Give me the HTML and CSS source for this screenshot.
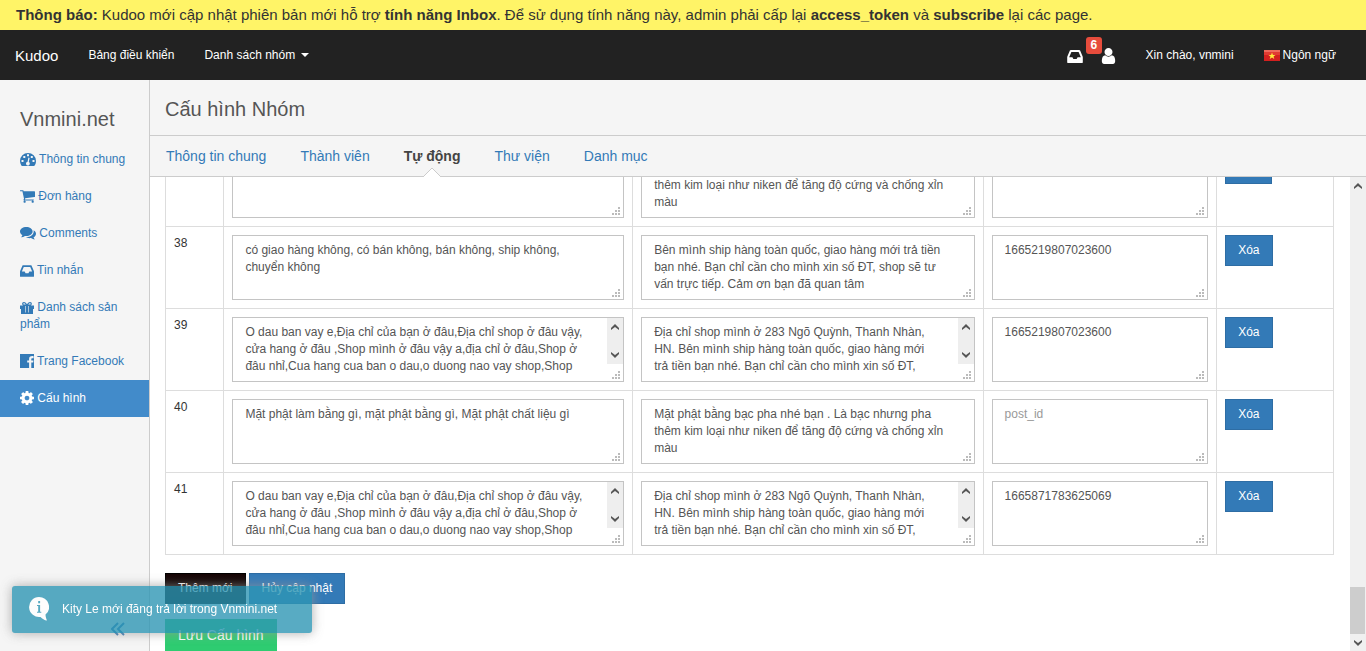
FILE: index.html
```html
<!DOCTYPE html>
<html lang="vi">
<head>
<meta charset="utf-8">
<title>Kudoo - Cấu hình Nhóm</title>
<link rel="stylesheet" href="styles.css">
</head>
<body>
<svg class="defs" aria-hidden="true">
  <symbol id="inbox" viewBox="128 256 1536 1280"><path d="M1151 960h316q-1-3-2.5-8t-2.5-8l-212-496h-708l-212 496q-1 2-2.5 8t-2.5 8h316l95 192h320zm513 30v482q0 26-19 45t-45 19h-1408q-26 0-45-19t-19-45v-482q0-62 25-123l238-552q10-25 36.5-42t52.5-17h832q26 0 52.5 17t36.5 42l238 552q25 61 25 123z"/></symbol>
  <symbol id="grip" viewBox="0 0 8 8"><path d="M0 6h2v2H0zM3 6h2v2H3zM6 6h2v2H6zM3 3h2v2H3zM6 3h2v2H6zM6 0h2v2H6z"/></symbol>
  <symbol id="up" viewBox="0 0 8 6"><path d="M0 4 4 0l4 4v2L4 3 0 6z"/></symbol>
  <symbol id="down" viewBox="0 0 8 6"><path d="M0 2l4 4 4-4V0L4 3 0 0z"/></symbol>
</svg>

<div class="notice"><b>Thông báo:</b> Kudoo mới cập nhật phiên bản mới hỗ trợ <b>tính năng Inbox</b>. Để sử dụng tính năng này, admin phải cấp lại <b>access_token</b> và <b>subscribe</b> lại các page.</div>

<nav class="topbar">
  <a class="brand" href="#">Kudoo</a>
  <a href="#">Bảng điều khiển</a>
  <a href="#">Danh sách nhóm <span class="caret"></span></a>
  <div class="alerts">
    <a class="alert-link" href="#" aria-label="Hộp thư"><svg class="inbox-icon"><use href="#inbox"/></svg><span class="badge">6</span></a>
    <a class="alert-link" href="#" aria-label="Tài khoản"><svg class="user-icon" viewBox="256 128 1280 1536"><path d="M1536 1399q0 109-62.5 187t-150.5 78h-854q-88 0-150.5-78t-62.5-187q0-85 8.5-160.5t31.5-152 58.5-131 94-89 134.5-34.5q131 128 313 128t313-128q76 0 134.5 34.5t94 89 58.5 131 31.5 152 8.5 160.5zm-256-887q0 159-112.5 271.5t-271.5 112.5-271.5-112.5-112.5-271.5 112.5-271.5 271.5-112.5 271.5 112.5 112.5 271.5z"/></svg></a>
  </div>
  <a href="#">Xin chào, vnmini</a>
  <a class="language" href="#"><svg class="flag" viewBox="0 0 16 11"><path fill="#d3201f" d="M0 0h16v11H0z"/><path fill="#ee6a5c" d="M0 0h16v2H0z"/><path fill="#e23b32" d="M0 2h16v3H0z"/><path fill="#ffec3d" d="M8 2.500l.9 2.400h2.600L9.500 6.500l.8 2.500L8 7.500 5.700 9l.8-2.500-2-1.600h2.600z"/></svg>Ngôn ngữ</a>
</nav>

<div class="shell">
  <aside class="sidebar">
    <h2>Vnmini.net</h2>
    <ul>
      <li><a href="#"><svg class="wide" viewBox="0 0 16 13"><path fill-rule="evenodd" d="M8 0a8 8 0 0 1 8 8c0 1.700-.5 3.200-1.300 4.500-.2.300-.4.500-.8.500H2.100c-.4 0-.6-.2-.8-.5A8.300 8.300 0 0 1 0 8a8 8 0 0 1 8-8zM7 1.300v2h2v-2zM3.300 3v2h2V3zM10.800 3v2h2V3zM1.500 7v2h2V7zM12.500 7v2h2V7zM8.400 4.600 7.600 8.700a1.900 1.900 0 1 0 1.200.2l.8-4z"/></svg> Thông tin chung</a></li>
      <li><a href="#"><svg class="cart" viewBox="64 256 1664 1408"><path d="M704 1536q0 52-38 90t-90 38-90-38-38-90 38-90 90-38 90 38 38 90zm896 0q0 52-38 90t-90 38-90-38-38-90 38-90 90-38 90 38 38 90zm128-1088v512q0 24-16.500 42.500t-40.500 21.500l-1044 122q13 60 13 70 0 16-24 64h920q26 0 45 19t19 45-19 45-45 19h-1024q-26 0-45-19t-19-45q0-11 8-31.500t16-36 21.500-40 15.500-29.500l-177-823h-204q-26 0-45-19t-19-45 19-45 45-19h256q16 0 28.500 6.500t19.500 15.500 13 24.500 8 26 5.500 29.500 4.500 26h1201q26 0 45 19t19 45z"/></svg> Đơn hàng</a></li>
      <li><a href="#"><svg class="wide" viewBox="0 0 16 13"><path d="M6.300 0c3.500 0 6.300 2 6.300 4.500S9.800 9 6.300 9L5 8.900C3.800 9.700 2.500 10.200 1 10.300c.7-.7 1.200-1.300 1.400-2.200C.9 7.300 0 6 0 4.500 0 2 2.800 0 6.300 0z"/><path d="M13.600 3.300c1.500.8 2.400 2 2.400 3.400 0 1.500-.9 2.800-2.400 3.600.2.900.7 1.500 1.400 2.200-1.500-.1-2.800-.6-4-1.400-1.900.3-3.800 0-5.200-1 4.300.2 7.800-2 7.900-5.600 0-.4 0-.8-.1-1.200z"/></svg> Comments</a></li>
      <li><a href="#"><svg><use href="#inbox"/></svg> Tin nhắn</a></li>
      <li><a href="#"><svg viewBox="0 0 14 12"><path fill-rule="evenodd" d="M0 3.500h3.300C1.800 3.200 1.500.1 3.900 0 5.500 0 6.200 1.200 7 2.300 7.800 1.200 8.500 0 10.100 0c2.400.1 2.100 3.200.6 3.500H14V7h-1v5H1V7H0zM3.900 1.200c-1 .1-.9 1.300 0 1.300h1.900c-.6-.8-1.100-1.300-1.900-1.300zM10.100 1.200c-.8 0-1.300.5-1.900 1.300h1.900c.9 0 1-1.200 0-1.300zM5.300 4v6.500h.6V4zM8.100 4v6.500h.6V4z"/></svg> Danh sách sản phẩm</a></li>
      <li><a href="#"><svg class="square" viewBox="0 0 14 14"><path d="M0 0h14v14h-2.700V8.600h1.900l.3-2.100h-2.200V5.200c0-.6.200-1 1.100-1h1.200V2.200c-3-.4-4.500.5-4.500 2.800v1.500H7.200v2.100h1.900V14H0z"/></svg> Trang Facebook</a></li>
      <li class="active"><a href="#"><svg class="square" viewBox="128 128 1536 1536"><path d="M1152 896q0-106-75-181t-181-75-181 75-75 181 75 181 181 75 181-75 75-181zm512-109v222q0 12-8 23t-20 13l-185 28q-19 54-39 91 35 50 107 138 10 12 10 25t-9 23q-27 37-99 108t-94 71q-12 0-26-9l-138-108q-44 23-91 38-16 136-29 186-7 28-36 28h-222q-14 0-24.500-8.500t-11.500-21.500l-28-184q-49-16-90-37l-141 107q-10 9-25 9-14 0-25-11-126-114-165-168-7-10-7-23 0-12 8-23 15-21 51-66.500t54-70.500q-27-50-41-99l-183-27q-13-2-21-12.500t-8-23.500v-222q0-12 8-23t19-13l186-28q14-46 39-92-40-57-107-138-10-12-10-24 0-10 9-23 26-36 98.500-107.500t94.500-71.500q13 0 26 10l138 107q44-23 91-38 16-136 29-186 7-28 36-28h222q14 0 24.500 8.500t11.500 21.500l28 184q49 16 90 37l142-107q9-9 24-9 13 0 25 10 129 119 165 170 7 8 7 22 0 12-8 23-15 21-51 66.500t-54 70.500q26 50 41 98l183 28q13 2 21 12.500t8 23.500z"/></svg> Cấu hình</a></li>
    </ul>
    <a class="collapse" href="#" aria-label="Thu gọn"><svg viewBox="0 0 14 14"><path d="M7 1 1 7l6 6M13 1 7 7l6 6"/></svg></a>
  </aside>

  <main class="main">
    <header class="page-head"><h1>Cấu hình Nhóm</h1></header>
    <nav class="tabs">
      <a href="#">Thông tin chung</a>
      <a href="#">Thành viên</a>
      <a class="current" href="#">Tự động<svg class="notch" viewBox="0 0 18 10"><path d="M0 10 9 1l9 9"/></svg></a>
      <a href="#">Thư viện</a>
      <a href="#">Danh mục</a>
    </nav>
    <div class="viewport">
      <div class="content">
        <table class="rules">
          <colgroup><col class="c-num"><col class="c-key"><col class="c-reply"><col class="c-post"><col class="c-act"></colgroup>
          <tbody>
          <tr>
            <td></td>
            <td><div class="field"><textarea aria-label="Từ khóa"></textarea><svg class="grip"><use href="#grip"/></svg></div></td>
            <td><div class="field"><textarea aria-label="Trả lời">Mặt phật bằng bạc pha nhé bạn . Là bạc nhưng pha
thêm kim loại như niken để tăng độ cứng và chống xỉn
màu</textarea><svg class="grip"><use href="#grip"/></svg></div></td>
            <td><div class="field"><textarea aria-label="Bài viết"></textarea><svg class="grip"><use href="#grip"/></svg></div></td>
            <td><button class="btn remove" type="button" aria-label="Xóa"></button></td>
          </tr>
          <tr>
            <td>38</td>
            <td><div class="field"><textarea aria-label="Từ khóa 38">có giao hàng không, có bán không, bán không, ship không,
chuyển không</textarea><svg class="grip"><use href="#grip"/></svg></div></td>
            <td><div class="field"><textarea aria-label="Trả lời 38">Bên mình ship hàng toàn quốc, giao hàng mới trả tiền
bạn nhé. Bạn chỉ cần cho mình xin số ĐT, shop sẽ tư
vấn trực tiếp. Cảm ơn bạn đã quan tâm</textarea><svg class="grip"><use href="#grip"/></svg></div></td>
            <td><div class="field"><textarea aria-label="Bài viết 38">1665219807023600</textarea><svg class="grip"><use href="#grip"/></svg></div></td>
            <td><button class="btn remove" type="button">Xóa</button></td>
          </tr>
          <tr>
            <td>39</td>
            <td><div class="field"><textarea aria-label="Từ khóa 39">O dau ban vay e,Địa chỉ của bạn ở đâu,Địa chỉ shop ở đâu vậy,
cửa hang ở đâu ,Shop mình ở đâu vậy a,địa chỉ ở đâu,Shop ở
đâu nhỉ,Cua hang cua ban o dau,o duong nao vay shop,Shop</textarea><span class="mini-scroll"><svg><use href="#up"/></svg><svg><use href="#down"/></svg></span><svg class="grip"><use href="#grip"/></svg></div></td>
            <td><div class="field"><textarea aria-label="Trả lời 39">Địa chỉ shop mình ở 283 Ngõ Quỳnh, Thanh Nhàn,
HN. Bên mình ship hàng toàn quốc, giao hàng mới
trả tiền bạn nhé. Bạn chỉ cần cho mình xin số ĐT,</textarea><span class="mini-scroll"><svg><use href="#up"/></svg><svg><use href="#down"/></svg></span><svg class="grip"><use href="#grip"/></svg></div></td>
            <td><div class="field"><textarea aria-label="Bài viết 39">1665219807023600</textarea><svg class="grip"><use href="#grip"/></svg></div></td>
            <td><button class="btn remove" type="button">Xóa</button></td>
          </tr>
          <tr>
            <td>40</td>
            <td><div class="field"><textarea aria-label="Từ khóa 40">Mặt phật làm bằng gì, mặt phật bằng gì, Mặt phật chất liệu gì</textarea><svg class="grip"><use href="#grip"/></svg></div></td>
            <td><div class="field"><textarea aria-label="Trả lời 40">Mặt phật bằng bạc pha nhé bạn . Là bạc nhưng pha
thêm kim loại như niken để tăng độ cứng và chống xỉn
màu</textarea><svg class="grip"><use href="#grip"/></svg></div></td>
            <td><div class="field"><textarea aria-label="Bài viết 40" placeholder="post_id"></textarea><svg class="grip"><use href="#grip"/></svg></div></td>
            <td><button class="btn remove" type="button">Xóa</button></td>
          </tr>
          <tr>
            <td>41</td>
            <td><div class="field"><textarea aria-label="Từ khóa 41">O dau ban vay e,Địa chỉ của bạn ở đâu,Địa chỉ shop ở đâu vậy,
cửa hang ở đâu ,Shop mình ở đâu vậy a,địa chỉ ở đâu,Shop ở
đâu nhỉ,Cua hang cua ban o dau,o duong nao vay shop,Shop</textarea><span class="mini-scroll"><svg><use href="#up"/></svg><svg><use href="#down"/></svg></span><svg class="grip"><use href="#grip"/></svg></div></td>
            <td><div class="field"><textarea aria-label="Trả lời 41">Địa chỉ shop mình ở 283 Ngõ Quỳnh, Thanh Nhàn,
HN. Bên mình ship hàng toàn quốc, giao hàng mới
trả tiền bạn nhé. Bạn chỉ cần cho mình xin số ĐT,</textarea><span class="mini-scroll"><svg><use href="#up"/></svg><svg><use href="#down"/></svg></span><svg class="grip"><use href="#grip"/></svg></div></td>
            <td><div class="field"><textarea aria-label="Bài viết 41">1665871783625069</textarea><svg class="grip"><use href="#grip"/></svg></div></td>
            <td><button class="btn remove" type="button">Xóa</button></td>
          </tr>
          </tbody>
        </table>
        <div class="actions">
          <button class="btn dark" type="button">Thêm mới</button>
          <button class="btn" type="button">Hủy cập nhật</button>
        </div>
        <button class="btn save" type="submit">Lưu Cấu hình</button>
      </div>
      <div class="scrollbar"><svg><use href="#up"/></svg><span class="thumb"></span><svg><use href="#down"/></svg></div>
    </div>
  </main>
</div>

<div class="toast" role="status">
  <svg viewBox="0 0 20 24"><path fill-rule="evenodd" d="M10 0a10 10 0 0 1 6.500 17.600c.1 2.300.6 4 1.500 6-2.600-.6-4.800-1.800-6.500-3.700A10 10 0 1 1 10 0zM9.200 4v2.200h1.900V4zM8 8v.9h1.200v5.900H8v.9h4.300v-.9h-1.200V8z"/></svg>
  <span>Kity Le mới đăng trả lời trong Vnmini.net</span>
</div>
</body>
</html>
```
FILE: styles.css
```css
* { box-sizing: border-box; }
html, body { height: 100%; }
body {
  margin: 0;
  display: flex;
  flex-direction: column;
  overflow: hidden;
  background: #fff;
  color: #333;
  font: 12px/17px "Liberation Sans", Arial, sans-serif;
}
a { color: #337ab7; text-decoration: none; }
svg { fill: currentColor; }
h1, h2 { margin: 0; font-size: 20px; line-height: 22px; font-weight: 400; color: #555; }
.defs { display: none; }

.notice { background: #fff467; padding: 5px 16px; font-size: 15px; line-height: 20px; }

.topbar {
  display: flex;
  align-items: center;
  gap: 30px;
  padding: 0 30px 0 15px;
  height: 50px;
  flex: none;
  background: #222;
}
.topbar a { color: #fff; }
.topbar .brand { font-size: 15px; }
.caret {
  display: inline-block;
  margin-left: 2px;
  vertical-align: middle;
  border: 4px solid transparent;
  border-top-color: #fff;
  border-bottom: 0;
}
.alerts { display: flex; gap: 18px; margin-left: auto; padding-top: 2px; }
.alert-link { position: relative; display: flex; align-items: center; }
.inbox-icon { width: 16px; height: 13px; }
.user-icon { width: 15px; height: 16px; }
.badge {
  position: absolute;
  left: 19px;
  bottom: 10px;
  padding: 0 5px;
  border-radius: 3px;
  background: #e74c3c;
  font-weight: 700;
}
.language { display: flex; align-items: center; gap: 3px; }
.flag { width: 16px; height: 11px; }

.shell { display: flex; flex: 1; min-height: 0; }
.sidebar {
  display: flex;
  flex-direction: column;
  width: 150px;
  flex: none;
  padding-top: 28px;
  border-right: 1px solid #ccc;
  background: #f5f5f5;
}
.sidebar h2 { padding: 0 20px; }
.sidebar ul { list-style: none; margin: 11px 0 0; padding: 0; }
.sidebar li a { display: block; padding: 10px 20px; }
.sidebar li svg { width: 14px; height: 12px; vertical-align: -3px; }
.sidebar li .wide { width: 16px; height: 13px; }
.sidebar li .cart { width: 15px; height: 13px; }
.sidebar li .square { height: 14px; }
.sidebar .active a { background: #428bca; color: #fff; }
.collapse { margin: auto 24px 15px auto; display: flex; }
.collapse svg { width: 14px; height: 14px; fill: none; stroke: currentColor; stroke-width: 2; }

.main { display: flex; flex-direction: column; flex: 1; min-width: 0; }
.page-head { padding: 18px 15px 15px; background: #f5f5f5; border-bottom: 1px solid #ccc; }
.tabs {
  display: flex;
  gap: 34px;
  padding: 0 16px;
  background: #f5f5f5;
  border-bottom: 1px solid #ccc;
  font-size: 14px;
  line-height: 40px;
}
.tabs a { position: relative; }
.tabs .current { color: #444; font-weight: 700; }
.notch {
  position: absolute;
  left: calc(50% - 9px);
  bottom: -1px;
  width: 18px;
  height: 10px;
  fill: #fff;
  stroke: #ccc;
}

.viewport { display: flex; flex: 1; min-height: 0; }
.content {
  display: flex;
  flex-direction: column;
  justify-content: flex-end;
  align-items: flex-start;
  flex: 1;
  min-width: 0;
  padding: 0 16px 0 15px;
  overflow: hidden;
}
.rules { width: 100%; table-layout: fixed; border-collapse: collapse; }
.rules td { padding: 8px; border: 1px solid #ddd; vertical-align: top; }
.c-num { width: 5%; }
.c-key { width: 35%; }
.c-reply { width: 30%; }
.c-post { width: 20%; }
.c-act { width: 10%; }
.field { position: relative; display: flex; }
.field textarea {
  width: 100%;
  height: 65px;
  padding: 6px 12px;
  border: 1px solid #c4c4c4;
  background: #fff;
  color: #555;
  font: inherit;
  white-space: pre;
  resize: none;
  overflow: hidden;
}
.field textarea::placeholder { color: #999; }
.grip { position: absolute; right: 4px; bottom: 3px; width: 8px; height: 8px; color: #bbb; }
.mini-scroll {
  position: absolute;
  top: 1px;
  right: 1px;
  width: 16px;
  height: 46px;
  padding: 6px 4px;
  display: flex;
  flex-direction: column;
  justify-content: space-between;
  background: #eee;
}
.mini-scroll svg, .scrollbar svg { width: 8px; height: 6px; color: #555; }

.btn {
  display: block;
  padding: 6px 12px;
  border: 1px solid #2e6da4;
  background: #337ab7;
  color: #fff;
  font: inherit;
}
.remove { min-width: 47px; min-height: 31px; }
.actions { display: flex; gap: 3px; margin: 18px 0 15px; }
.dark { border-color: #000; background: linear-gradient(#160505, #000); }
.save { border-color: #2ecc71; background: #2ecc71; font-size: 14px; line-height: 18px; }

.scrollbar {
  display: flex;
  flex-direction: column;
  align-items: center;
  width: 16px;
  flex: none;
  padding: 6px 0 5px;
  background: #f0f0f0;
}
.thumb { width: 100%; height: 47px; margin: auto 0 6px; background: #cdcdcd; border-right: 1px solid #f0f0f0; }

.toast {
  position: fixed;
  left: 12px;
  bottom: 18px;
  display: flex;
  align-items: center;
  gap: 13px;
  width: 300px;
  padding: 11px 17px 12px;
  border-radius: 3px;
  background: #2f96b4;
  box-shadow: 0 0 12px #999;
  color: #fff;
  opacity: 0.8;
}
.toast svg { width: 20px; height: 24px; }
```
